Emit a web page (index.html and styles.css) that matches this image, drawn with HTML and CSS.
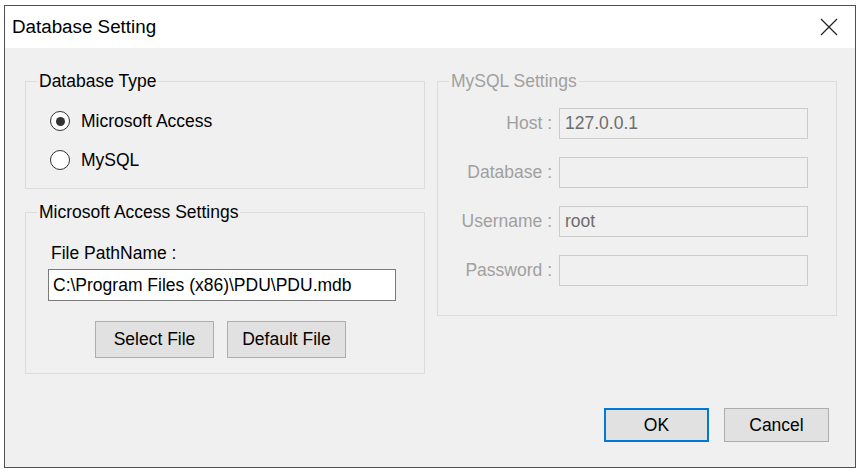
FILE: index.html
```html
<!DOCTYPE html>
<html lang="en">
<head>
    <meta charset="UTF-8">
    <title>Database Setting</title>
    <link rel="stylesheet" href="styles.css">
</head>
<body>

<div class="dialog">
    <div class="titlebar">
        <span class="title">Database Setting</span>
        <svg class="close" width="18" height="18" viewBox="0 0 18 18">
            <path d="M1 1 L17 17 M17 1 L1 17" stroke="#222" stroke-width="1.2" fill="none"/>
        </svg>
    </div>

    <div class="content">
        <div class="columns">
            <div class="left-col">
                <fieldset class="group type-group">
                    <legend>Database Type</legend>
                    <label class="radio-row">
                        <span class="radio checked"></span>
                        <span>Microsoft Access</span>
                    </label>
                    <label class="radio-row">
                        <span class="radio"></span>
                        <span>MySQL</span>
                    </label>
                </fieldset>

                <fieldset class="group access-group">
                    <legend>Microsoft Access Settings</legend>
                    <div class="path-label">File PathName :</div>
                    <div class="path-input">C:\Program Files (x86)\PDU\PDU.mdb</div>
                    <div class="file-buttons">
                        <div class="btn">Select File</div>
                        <div class="btn">Default File</div>
                    </div>
                </fieldset>
            </div>

            <fieldset class="group mysql-group">
                <legend>MySQL Settings</legend>
                <div class="field-row">
                    <span class="field-label">Host :</span>
                    <div class="field-input">127.0.0.1</div>
                </div>
                <div class="field-row">
                    <span class="field-label">Database :</span>
                    <div class="field-input"></div>
                </div>
                <div class="field-row">
                    <span class="field-label">Username :</span>
                    <div class="field-input">root</div>
                </div>
                <div class="field-row">
                    <span class="field-label">Password :</span>
                    <div class="field-input"></div>
                </div>
            </fieldset>
        </div>

        <div class="footer-buttons">
            <div class="btn btn-default">OK</div>
            <div class="btn">Cancel</div>
        </div>
    </div>
</div>

</body>
</html>
```

FILE: styles.css
```css
body {
    margin: 5px 0 0 4px;
    background-color: #fff;
    font-family: "Liberation Sans", Arial, sans-serif;
    font-size: 17.5px;
    color: #000;
}

.dialog {
    width: 850px;
    height: 461px;
    border: 1px solid #505050;
    display: flex;
    flex-direction: column;
}

.titlebar {
    height: 42px;
    background-color: #fff;
    display: flex;
    align-items: center;
    justify-content: space-between;
    padding: 0 17px 0 7px;
}

.title {
    font-size: 18.8px;
}

.close {
    display: block;
}

.content {
    flex: 1;
    background-color: #f0f0f0;
    padding: 24px 18px 0 20px;
}

.columns {
    display: flex;
    gap: 12px;
    align-items: flex-start;
}

.left-col {
    width: 400px;
    display: flex;
    flex-direction: column;
    gap: 14px;
}

/* group box */
.group {
    margin: 0;
    border: 1px solid #dcdcdc;
    padding: 0 11px;
    min-width: 0;
}

.group legend {
    padding: 0 2px;
    line-height: 18px;
}

.type-group {
    padding-top: 19px;
    padding-bottom: 16px;
    display: flex;
    flex-direction: column;
    gap: 15px;
}

.radio-row {
    display: flex;
    align-items: center;
    height: 24px;
    margin-left: 13px;
}

.radio {
    width: 18px;
    height: 18px;
    border: 1px solid #333;
    border-radius: 50%;
    background-color: #fff;
    margin-right: 11px;
    display: flex;
    align-items: center;
    justify-content: center;
}

.radio.checked::after {
    content: "";
    width: 9px;
    height: 9px;
    border-radius: 50%;
    background-color: #333;
}

.access-group {
    padding-top: 23px;
    padding-bottom: 15px;
}

.path-label {
    line-height: 18px;
    margin-left: 14px;
}

.path-input {
    width: 348px;
    height: 32px;
    box-sizing: border-box;
    margin: 7px 0 0 11px;
    border: 1px solid #7a7a7a;
    background-color: #fff;
    padding-left: 4px;
    line-height: 30px;
    white-space: nowrap;
}

.file-buttons {
    display: flex;
    gap: 13px;
    margin: 20px 0 0 58px;
}

.btn {
    width: 119px;
    height: 37px;
    box-sizing: border-box;
    border: 1px solid #adadad;
    background-color: #e1e1e1;
    display: flex;
    align-items: center;
    justify-content: center;
}

/* disabled mysql group */
.mysql-group {
    width: 400px;
    box-sizing: border-box;
    color: #a0a0a0;
    padding-top: 18px;
    padding-bottom: 29px;
    display: flex;
    flex-direction: column;
    gap: 18px;
}

.field-row {
    display: flex;
    align-items: center;
}

.field-label {
    width: 103px;
    text-align: right;
    margin-right: 7px;
    white-space: nowrap;
}

.field-input {
    width: 249px;
    height: 31px;
    box-sizing: border-box;
    border: 1px solid #cccccc;
    background-color: #f0f0f0;
    color: #6d6d6d;
    padding-left: 5px;
    line-height: 29px;
}

.footer-buttons {
    display: flex;
    justify-content: flex-end;
    gap: 15px;
    margin: 34px 8px 0 0;
}

.footer-buttons .btn {
    width: 105px;
    height: 34px;
}

.footer-buttons .btn-default {
    border: 2px solid #0078d7;
}
```
